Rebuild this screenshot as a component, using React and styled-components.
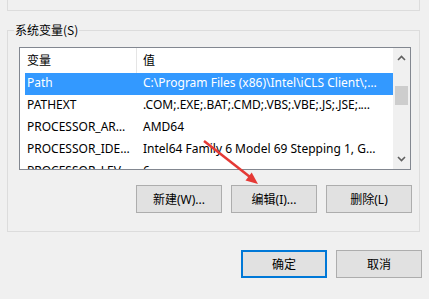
import styled, { createGlobalStyle } from "styled-components";

const GlobalStyle = createGlobalStyle`
  html, body {
    margin: 0;
    padding: 0;
    background: #f0f0f0;
  }
  body {
    font-family: "Noto Sans", "Noto Sans CJK SC", sans-serif;
    font-size: 12px;
    color: #000;
  }
`;

const Dialog = styled.div`
  position: relative;
  width: 429px;
  height: 299px;
  overflow: hidden;
  box-sizing: border-box;
  padding: 0 9px 0 7px;
`;

const PrevGroup = styled.div`
  height: 10px;
  border: 1px solid #dcdcdc;
  border-top: none;
`;

const Group = styled.fieldset`
  margin: 11px 0 0;
  padding: 9px 8px 18px 11px;
  border: 1px solid #dcdcdc;
  min-width: 0;
`;

const Legend = styled.legend`
  margin-left: -5px;
  padding: 0 1px;
  line-height: 16px;
  font-family: "Noto Sans CJK SC", sans-serif;
`;

const ListBox = styled.div`
  display: flex;
  height: 121px;
  border: 1px solid #828790;
  background: #fff;
  overflow: hidden;
`;

const Table = styled.div`
  flex: 1;
  min-width: 0;
  display: flex;
  flex-direction: column;
`;

const HeaderRow = styled.div`
  display: grid;
  grid-template-columns: 117px 1fr;
  height: 25px;
  flex-shrink: 0;
`;

const HeaderCell = styled.div`
  line-height: 24px;
  padding-left: ${(p) => (p.first ? "7px" : "6px")};
  border-right: ${(p) => (p.first ? "1px solid #e5e5e5" : "none")};
  font-family: "Noto Sans CJK SC", sans-serif;
`;

const Row = styled.div`
  display: grid;
  grid-template-columns: 111px 1fr;
  margin-left: 5px;
  height: 22px;
  flex-shrink: 0;
  background: ${(p) => (p.selected ? "#3399ff" : "transparent")};
  color: ${(p) => (p.selected ? "#fff" : "#000")};
`;

const Cell = styled.div`
  line-height: 19px;
  padding-left: ${(p) => (p.first ? "2px" : "7px")};
  padding-right: ${(p) => (p.first ? "5px" : "14px")};
  white-space: nowrap;
  overflow: hidden;
  text-overflow: ellipsis;
`;

const ScrollBar = styled.div`
  width: 17px;
  flex-shrink: 0;
  background: #f0f0f0;
  display: flex;
  flex-direction: column;
`;

const ScrollArrow = styled.div`
  height: 20px;
  display: flex;
  align-items: center;
  justify-content: center;
`;

const Track = styled.div`
  flex: 1;
  padding: 18px 2px 0;
`;

const Thumb = styled.div`
  height: 19px;
  background: #cdcdcd;
`;

const ButtonRow = styled.div`
  display: flex;
  justify-content: flex-end;
  gap: 9px;
  margin-top: 15px;
  margin-right: -1px;
`;

const Button = styled.button`
  width: 86px;
  height: 28px;
  box-sizing: border-box;
  border: ${(p) => (p.primary ? "2px solid #0078d7" : "1px solid #adadad")};
  background: #e1e1e1;
  font-family: "Noto Sans", "Noto Sans CJK SC", sans-serif;
  font-size: 12px;
  color: #000;
  padding: 0;
`;

const Footer = styled.div`
  display: flex;
  justify-content: flex-end;
  gap: 9px;
  margin-top: 18px;
  margin-right: -2px;
`;

const ArrowOverlay = styled.svg`
  position: absolute;
  left: 0;
  top: 0;
  pointer-events: none;
`;

const Chevron = ({ down }) => (
  <svg width="9" height="6" viewBox="0 0 9 6">
    <polyline
      points={down ? "1,1 4.5,4.5 8,1" : "1,5 4.5,1.5 8,5"}
      fill="none"
      stroke="#606060"
      strokeWidth="1.6"
    />
  </svg>
);

const variables = [
  ["Path", "C:\\Program Files (x86)\\Intel\\iCLS Client\\;C:\\Program Files\\Intel"],
  ["PATHEXT", ".COM;.EXE;.BAT;.CMD;.VBS;.VBE;.JS;.JSE;.WSF;.WSH;.MSC"],
  ["PROCESSOR_ARCHITECTURE", "AMD64"],
  ["PROCESSOR_IDENTIFIER", "Intel64 Family 6 Model 69 Stepping 1, GenuineIntel"],
  ["PROCESSOR_LEVEL", "6"],
];

const App = () => {
  return (
    <>
      <GlobalStyle />
      <Dialog>
        <PrevGroup />
        <Group>
          <Legend>系统变量(S)</Legend>
          <ListBox>
            <Table>
              <HeaderRow>
                <HeaderCell first>变量</HeaderCell>
                <HeaderCell>值</HeaderCell>
              </HeaderRow>
              {variables.map(([name, value], i) => (
                <Row key={name} selected={i === 0}>
                  <Cell first>{name}</Cell>
                  <Cell>{value}</Cell>
                </Row>
              ))}
            </Table>
            <ScrollBar>
              <ScrollArrow>
                <Chevron />
              </ScrollArrow>
              <Track>
                <Thumb />
              </Track>
              <ScrollArrow>
                <Chevron down />
              </ScrollArrow>
            </ScrollBar>
          </ListBox>
          <ButtonRow>
            <Button>新建(W)...</Button>
            <Button>编辑(I)...</Button>
            <Button>删除(L)</Button>
          </ButtonRow>
        </Group>
        <Footer>
          <Button primary>确定</Button>
          <Button>取消</Button>
        </Footer>

        {/* red annotation arrow */}
        <ArrowOverlay width="429" height="299">
          <line x1="204" y1="141" x2="250" y2="177" stroke="#e53935" strokeWidth="2.5" />
          <polygon points="258,184 245.5,180.4 251.7,172.6" fill="#e53935" />
        </ArrowOverlay>
      </Dialog>
    </>
  );
};

export default App;
